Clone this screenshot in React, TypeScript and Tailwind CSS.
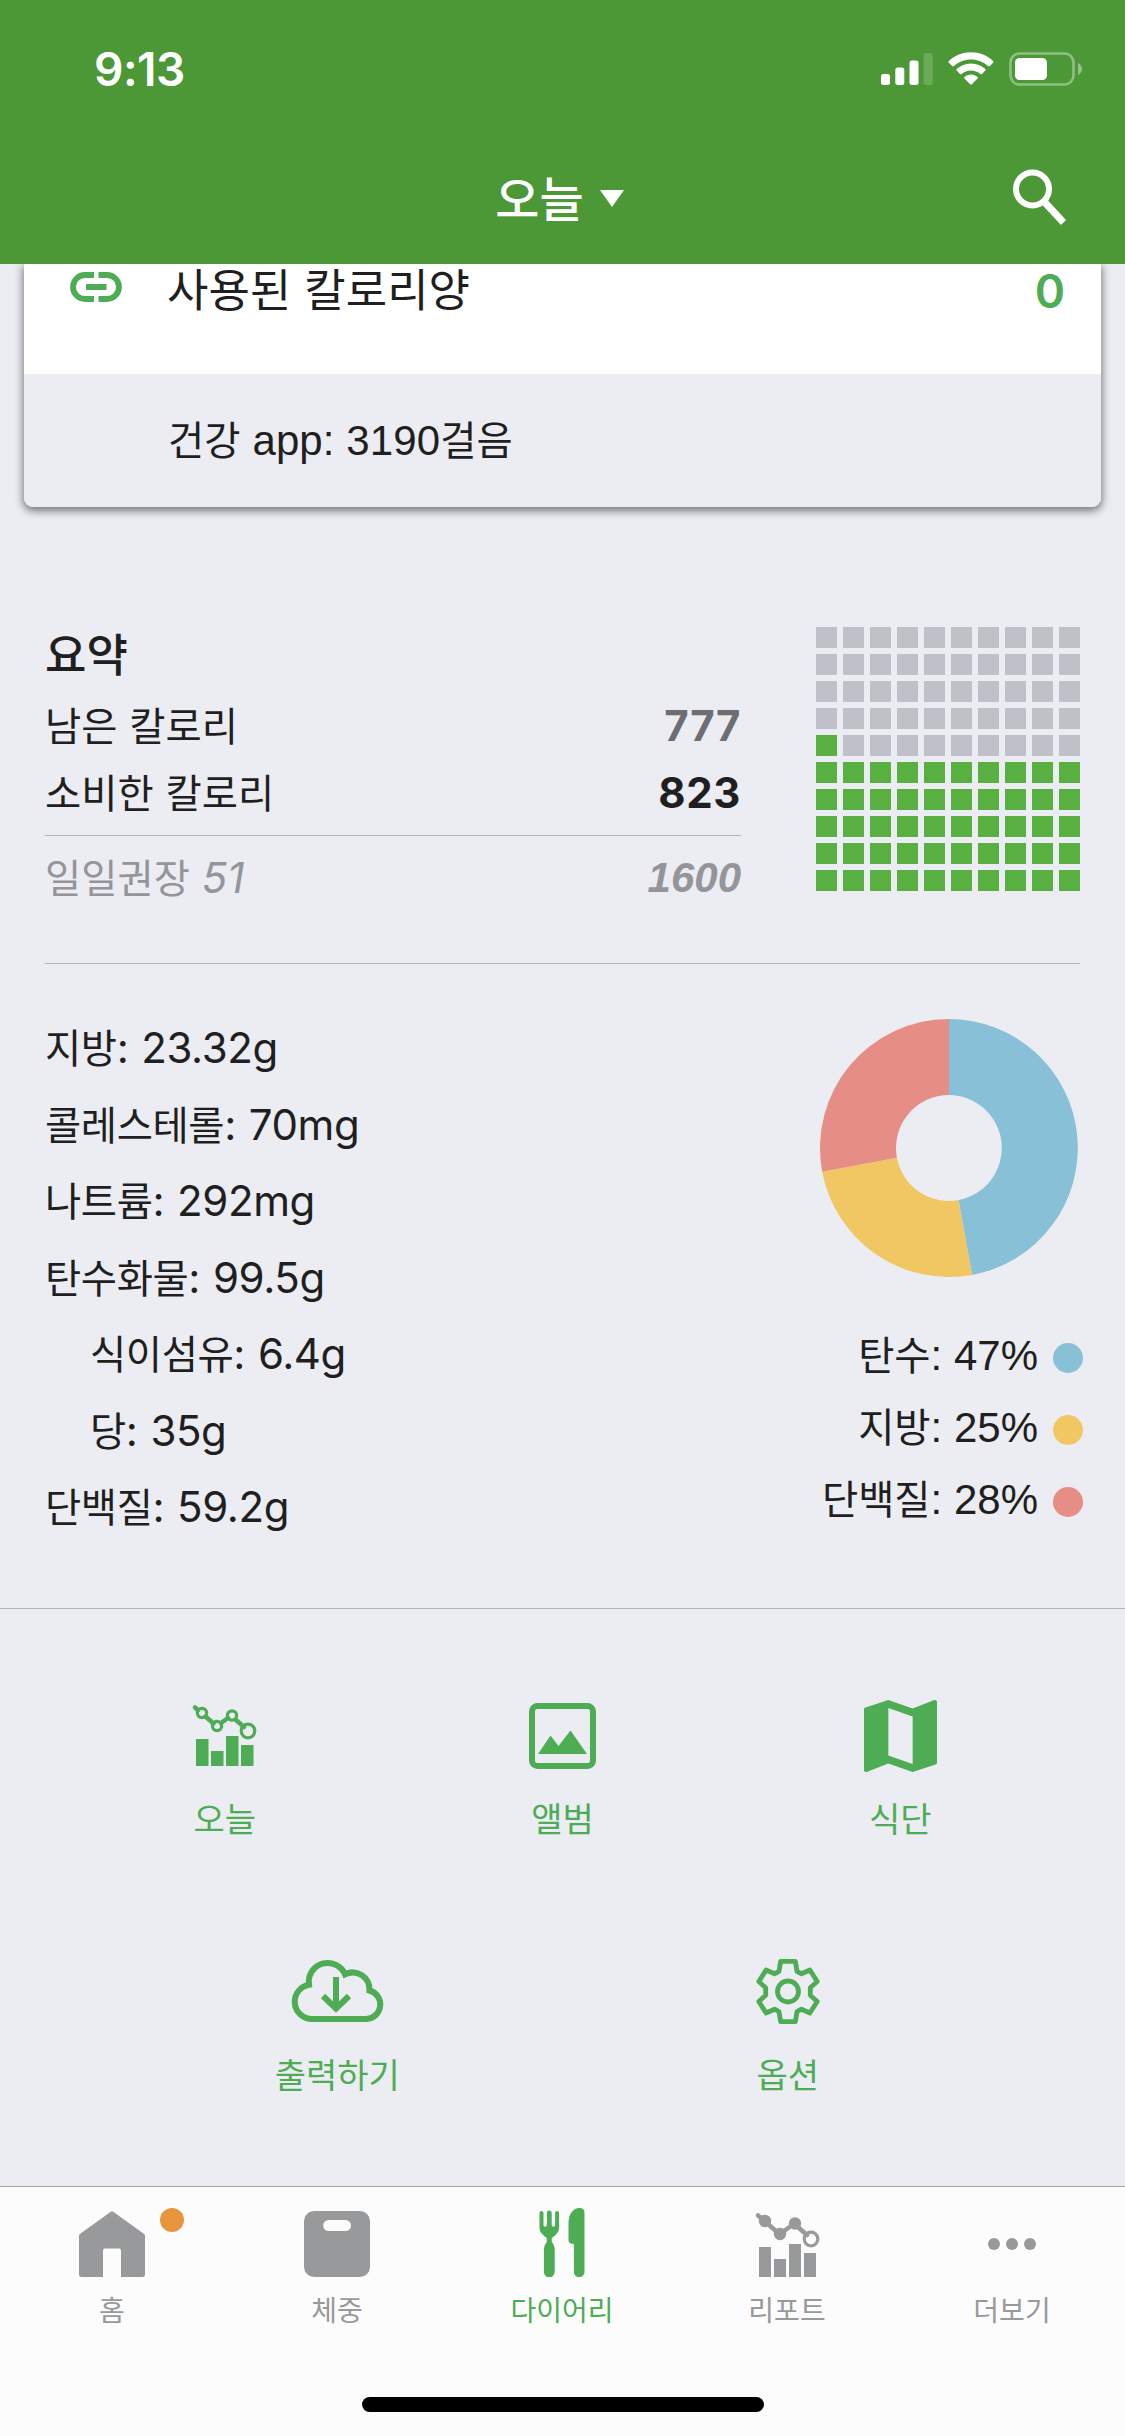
import type { ReactNode } from "react";

const HANGUL = /([\u3131-\uD79D]+(?: [\u3131-\uD79D]+)*)/;

/** Sets Hangul runs slightly smaller than the Latin text they sit beside. */
function Mixed({ children }: { children: string }) {
  return (
    <>
      {children.split(HANGUL).map((run, i) =>
        i % 2 ? (
          <span
            key={i}
            className="align-[0.5px] font-['Noto_Sans_CJK_KR',sans-serif] text-[0.938em] leading-none not-italic [word-spacing:3px]"
          >
            {run}
          </span>
        ) : (
          run
        ),
      )}
    </>
  );
}

function StatusBar() {
  return (
    <div className="flex h-[138px] items-center justify-between pl-[94px] pr-[43px]">
      <span className="text-[46px] font-semibold leading-none tracking-[-0.5px]">9:13</span>
      <div className="flex items-center">
        <svg className="mr-[15px] h-[34px] w-[52px]" viewBox="0 0 52 34" fill="currentColor">
          <rect x="0" y="22" width="9" height="11" rx="2.5" />
          <rect x="14.3" y="15.5" width="9" height="17.5" rx="2.5" />
          <rect x="28.5" y="8.5" width="9" height="24.5" rx="2.5" />
          <rect x="42.6" y="1" width="9" height="32" rx="2.5" opacity="0.18" />
        </svg>
        <svg className="mr-[15px] h-[34px] w-[46px]" viewBox="0 0 46 34" fill="currentColor">
          <path d="M23 0.3C31.6 0.3 39.3 3.6 45.1 9c.6.5.6 1.300 0 1.800l-3.300 3.300c-.5.5-1.200.5-1.700 0C35.600 10 29.600 7.500 23 7.500S10.400 10 5.900 14.100c-.5.5-1.200.5-1.700 0L.9 10.800C.3 10.300.3 9.500.9 9 6.700 3.600 14.400.3 23 .3z" />
          <path d="M23 11.400c5.500 0 10.500 2.100 14.300 5.500.5.5.5 1.200 0 1.700l-3.300 3.300c-.5.5-1.200.5-1.700 0-2.500-2.100-5.700-3.400-9.300-3.400s-6.800 1.300-9.300 3.400c-.5.5-1.200.5-1.700 0l-3.300-3.300c-.5-.5-.5-1.200 0-1.700 3.800-3.400 8.800-5.500 14.300-5.500z" />
          <path d="M23 22.500c2.500 0 4.800.9 6.500 2.400.5.5.5 1.200 0 1.700l-5.600 5.600c-.5.5-1.300.5-1.800 0l-5.600-5.600c-.5-.5-.5-1.200 0-1.700 1.700-1.500 4-2.400 6.500-2.400z" />
        </svg>
        <svg className="h-[34px] w-[73px]" viewBox="0 0 73 34" fill="currentColor">
          <rect x="1.500" y="1.500" width="63" height="31" rx="9" fill="none" stroke="currentColor" strokeWidth="2.600" opacity="0.38" />
          <rect x="6" y="6" width="32" height="22" rx="4.500" />
          <path d="M69 11v12c2.500-1 4-3.400 4-6s-1.500-5-4-6z" opacity="0.4" />
        </svg>
      </div>
    </div>
  );
}

function Header() {
  return (
    <header className="relative z-10 h-[264px] shrink-0 bg-[#4c9836] text-white">
      <StatusBar />
      <div className="grid h-[119px] grid-cols-[1fr_auto_1fr] items-center">
        <span />
        <button className="flex items-center pb-[2px] pr-[6px]">
          <span className="pb-[2px] font-['Noto_Sans_CJK_KR',sans-serif] text-[48px] font-medium leading-none">오늘</span>
          <svg className="ml-[16px] mt-[4px] h-[17px] w-[24px]" viewBox="0 0 24 17" fill="currentColor">
            <path d="M0 0H24L12 17z" />
          </svg>
        </button>
        <svg className="mr-[58px] h-[57px] w-[55px] justify-self-end" viewBox="0 0 55 57" fill="none" stroke="currentColor">
          <circle cx="20.500" cy="20" r="16.500" strokeWidth="6" />
          <path d="M32 32.500L51.500 53.500" strokeWidth="7" />
        </svg>
      </div>
    </header>
  );
}

function CalorieCard() {
  return (
    <section className="mx-6 shrink-0 rounded-b-[9px] shadow-[0_3px_9px_1px_rgba(0,0,0,0.5)]">
      <div className="flex h-[110px] items-start bg-white pl-[46px] pr-[36px]">
        <svg className="mt-[8px] h-[30px] w-[52px] text-[#4eac55]" viewBox="0 0 52 30" fill="none" stroke="currentColor">
          <path d="M24 3H15a12 12 0 0 0 0 24H24M28.500 3H37a12 12 0 0 1 0 24H28.500" strokeWidth="5.800" />
          <path d="M16 15H36.500" strokeWidth="6" />
        </svg>
        <span className="ml-[45px] mt-[-4px] text-[48px] leading-[60px]">
          <Mixed>사용된 칼로리양</Mixed>
        </span>
        <span className="ml-auto text-[46px] font-semibold leading-[54px] text-[#4eac55]">0</span>
      </div>
      <div className="flex h-[133px] items-center rounded-b-[9px] bg-[#ecedf2] pl-[144px] pt-px font-['Liberation_Sans',sans-serif] text-[42px] leading-[60px]">
        <span className="whitespace-pre tracking-[0.1px]">
          <Mixed>건강 app: 3190걸음</Mixed>
        </span>
      </div>
    </section>
  );
}

function BudgetGrid({ filled }: { filled: number }) {
  return (
    <div className="mt-1 grid h-[264px] grid-cols-[repeat(10,21px)] gap-[6px]">
      {Array.from({ length: 100 }, (_, i) => {
        const row = 9 - Math.floor(i / 10);
        const on = row * 10 + (i % 10) < filled;
        return <span key={i} className={`h-[21px] ${on ? "bg-[#58b041]" : "bg-[#c0c0c9]"}`} />;
      })}
    </div>
  );
}

function Summary() {
  return (
    <section className="mx-[45px] mt-[116px] flex h-[341px] shrink-0 justify-between border-b border-[#b3b5ba]">
      <div className="w-[696px] text-[42px]">
        <h2 className="h-[69px] text-[48px] font-medium leading-[64px]">
          <Mixed>요약</Mixed>
        </h2>
        <div className="flex justify-between leading-[67px]">
          <span><Mixed>남은 칼로리</Mixed></span>
          <span className="font-bold tracking-[0.6px] text-[#6d6e71]">777</span>
        </div>
        <div className="flex justify-between leading-[67px]">
          <span><Mixed>소비한 칼로리</Mixed></span>
          <span className="font-bold tracking-[0.6px]">823</span>
        </div>
        <div className="mt-[9px] flex justify-between border-t border-[#b3b5ba] pt-[12px] italic leading-[60px] text-[#949598]">
          <span><Mixed>일일권장 51</Mixed></span>
          <span className="font-['Liberation_Sans',sans-serif] font-bold">1600</span>
        </div>
      </div>
      <BudgetGrid filled={51} />
    </section>
  );
}

const NUTRIENTS = [
  { text: "지방: 23.32g" },
  { text: "콜레스테롤: 70mg" },
  { text: "나트륨: 292mg" },
  { text: "탄수화물: 99.5g" },
  { text: "식이섬유: 6.4g", sub: true },
  { text: "당: 35g", sub: true },
  { text: "단백질: 59.2g" },
];

const MACROS = [
  { text: "탄수: 47%", dot: "bg-[#88c0d7]" },
  { text: "지방: 25%", dot: "bg-[#f0c762]" },
  { text: "단백질: 28%", dot: "bg-[#e68d85]" },
];

function Donut() {
  return (
    <svg className="mr-[4.500px] h-[260px] w-[260px]" viewBox="-130 -130 260 260">
      <path d="M0 -129A129 129 0 0 1 23 126.900L9.500 52.100A53 53 0 0 0 0 -53z" fill="#88c0d7" />
      <path d="M23 126.900A129 129 0 0 1 -126.800 23.800L-52.100 9.800A53 53 0 0 0 9.500 52.100z" fill="#f0c762" />
      <path d="M-126.800 23.800A129 129 0 0 1 0 -129V-53A53 53 0 0 0 -52.100 9.800z" fill="#e68d85" />
    </svg>
  );
}

function Nutrition() {
  return (
    <section className="flex h-[645px] shrink-0 justify-between border-b border-[#b3b5ba] pl-[45px] pr-[42px]">
      <ul className="mt-[46px] text-[42px] leading-[76.5px]">
        {NUTRIENTS.map((n) => (
          <li key={n.text} className={n.sub ? "pl-[45px]" : ""}>
            <span className="tracking-[-0.4px] [word-spacing:1.5px]">
              <Mixed>{n.text}</Mixed>
            </span>
          </li>
        ))}
      </ul>
      <div className="mt-[53.5px] flex flex-col items-end">
        <Donut />
        <ul className="mt-[42.5px] font-['Liberation_Sans',sans-serif] text-[42px] leading-[72px]">
          {MACROS.map((m) => (
            <li key={m.text} className="flex items-center justify-end">
              <span><Mixed>{m.text}</Mixed></span>
              <span className={`ml-[15px] mt-[3px] size-[30px] rounded-full ${m.dot}`} />
            </li>
          ))}
        </ul>
      </div>
    </section>
  );
}

function TrendIcon({ solid = false }: { solid?: boolean }) {
  const node = solid ? "currentColor" : "none";
  return (
    <svg className="h-[66px] w-[66px]" viewBox="0 0 66 66" fill="none" stroke="currentColor" strokeWidth="3.2">
      {solid ? (
        <path d="M5 36h12v30H5zM20 48h12v18H20zM35 33h12v33H35zM50 42h12v24H50z" fill="currentColor" stroke="none" />
      ) : (
        <path d="M5 36h12.500v27H5zM20 48h12.500v15H20zM35 33h12.500v30H35zM50 42h12.500v21H50z" fill="currentColor" stroke="none" />
      )}
      <path d="M4 4.500L7 7M14.500 13.500L22.500 20.500M30 20L37 15M45 17L53 24" strokeWidth="4.500" strokeLinecap="round" />
      <circle cx="11" cy="10" r="4.600" fill={node} />
      <circle cx="26" cy="23" r="4.600" fill={node} />
      <circle cx="41" cy="12.500" r="4.600" fill={node} />
      <circle cx="57" cy="28" r="6.800" />
    </svg>
  );
}

function AlbumIcon() {
  return (
    <svg className="h-[66px] w-[67px]" viewBox="0 0 67 66" fill="currentColor">
      <rect x="3" y="3" width="61" height="60" rx="5.500" fill="none" stroke="currentColor" strokeWidth="6" />
      <path d="M9 51L21.500 32.500 29.500 43 41.500 27.500 58 51z" />
    </svg>
  );
}

function MapIcon() {
  return (
    <svg className="h-[72px] w-[73px]" viewBox="3 3 18 18" preserveAspectRatio="none" fill="currentColor">
      <path d="M20.500 3l-.16.03L15 5.100 9 3 3.360 4.900c-.21.07-.36.25-.36.48V20.500c0 .28.22.5.5.5l.16-.03L9 18.900l6 2.100 5.640-1.900c.21-.07.36-.25.36-.48V3.500c0-.28-.22-.5-.5-.5zM15 19l-6-2.110V5l6 2.110V19z" />
    </svg>
  );
}

function CloudIcon() {
  return (
    <svg className="mb-[3px] h-[63px] w-[93px] overflow-visible" viewBox="291 1959 93 63" fill="none" stroke="currentColor" strokeWidth="6">
      <path d="M311 2019H366.500A14.500 14.500 0 0 0 369.500 1990.500A17 17 0 0 0 345 1974.300A18.900 18.900 0 0 0 309 1984.700A17.300 17.300 0 0 0 311 2019z" />
      <path d="M336 1977V2009M323 1996L336 2008.500 349 1996" />
    </svg>
  );
}

function GearIcon() {
  return (
    <svg className="mb-[2px] h-[65px] w-[64px]" viewBox="0 0 64 65" fill="none" stroke="currentColor" strokeLinejoin="round">
      <path
        d="M24.600 2.400H39.400L41 12.300 45.500 14.800 53.900 11 61.200 22.500 54.300 28.700V36.300L61.200 42.500 53.900 54 45.500 50.200 41 52.700 39.400 62.600H24.600L23 52.700 18.500 50.200 10.100 54 2.800 42.500 9.700 36.300V28.700L2.800 22.500 10.100 11 18.500 14.800 23 12.300z"
        strokeWidth="4.800"
      />
      <circle cx="32" cy="32.500" r="10.500" strokeWidth="4.800" />
    </svg>
  );
}

function Action({ icon, label }: { icon: ReactNode; label: string }) {
  return (
    <button className="flex flex-col items-center text-[#4eac55]">
      <span className="flex h-[74px] items-center">{icon}</span>
      <span className="mt-[25px] pb-px font-['Noto_Sans_CJK_KR',sans-serif] text-[34px] leading-[40px]">{label}</span>
    </button>
  );
}

function Actions() {
  return (
    <section className="flex h-[577px] shrink-0 flex-col pt-[90px]">
      <div className="grid grid-cols-3 px-[56px]">
        <Action icon={<span className="mr-[2px]"><TrendIcon /></span>} label="오늘" />
        <Action icon={<AlbumIcon />} label="앨범" />
        <Action icon={<MapIcon />} label="식단" />
      </div>
      <div className="mt-[116px] grid grid-cols-2 px-[112px]">
        <Action icon={<CloudIcon />} label="출력하기" />
        <Action icon={<GearIcon />} label="옵션" />
      </div>
    </section>
  );
}

function HomeIcon() {
  return (
    <svg className="h-[66px] w-[66px]" viewBox="0 0 66 66" fill="currentColor">
      <path d="M31.500 1Q33 -.6 34.500 1L65.200 23Q66 23.700 66 25V63.500Q66 66 63.500 66H42V39.500Q42 37.500 40 37.500H26Q24 37.500 24 39.500V66H2.500Q0 66 0 63.500V25Q0 23.700 .8 23z" />
    </svg>
  );
}

function ScaleIcon() {
  return (
    <svg className="h-[66px] w-[66px]" viewBox="0 0 66 66" fill="currentColor">
      <path
        fillRule="evenodd"
        d="M10 0H56A10 10 0 0 1 66 10V56A10 10 0 0 1 56 66H10A10 10 0 0 1 0 56V10A10 10 0 0 1 10 0zM24.700 9A5.500 5.500 0 0 0 24.700 20H41.500A5.500 5.500 0 0 0 41.500 9z"
      />
    </svg>
  );
}

function CutleryIcon() {
  return (
    <svg className="-mt-[3px] h-[69px] w-[46px]" viewBox="539.500 2208 46 69" fill="currentColor">
      <path d="M540 2213a2 2 0 0 1 4 0V2225a1.700 1.700 0 0 0 3.400 0V2213a2.200 2.200 0 0 1 4.800 0V2225a1.700 1.700 0 0 0 3.400 0V2213a2 2 0 0 1 4 0V2228Q559.600 2233 552.300 2238V2242Q555.200 2245 555.200 2249V2272a5.400 5.400 0 0 1 -10.800 0V2249Q544.400 2245 547.300 2242V2238Q540 2233 540 2228z" />
      <path d="M585 2213V2272a5.300 5.300 0 0 1 -10.600 0V2244Q569 2244 569 2240V2224C569 2213 574 2208 580 2208Q585 2208 585 2213z" />
    </svg>
  );
}

function DotsIcon() {
  return (
    <svg className="h-[66px] w-[66px]" viewBox="0 0 66 66" fill="currentColor">
      <circle cx="15" cy="33" r="6" />
      <circle cx="33" cy="33" r="6" />
      <circle cx="51" cy="33" r="6" />
    </svg>
  );
}

const TABS = [
  { label: "홈", icon: <HomeIcon />, badge: true },
  { label: "체중", icon: <ScaleIcon /> },
  { label: "다이어리", icon: <CutleryIcon />, active: true },
  { label: "리포트", icon: <TrendIcon solid /> },
  { label: "더보기", icon: <DotsIcon /> },
];

function TabBar() {
  return (
    <nav className="flex h-[250px] shrink-0 flex-col border-t border-[#a2a4a8] bg-[#fcfcfd]">
      <div className="grid grid-cols-5 pt-[24px]">
        {TABS.map((t) => (
          <button
            key={t.label}
            className={`relative flex flex-col items-center ${t.active ? "text-[#4eac55]" : "text-[#98999b]"}`}
          >
            <span className="mr-px">{t.icon}</span>
            {t.badge && <span className="absolute left-[160px] top-[-3px] h-[24px] w-[24px] rounded-full bg-[#e8963e]" />}
            <span className="mr-px mt-[14px] font-['Noto_Sans_CJK_KR',sans-serif] text-[28px] leading-[36px]">{t.label}</span>
          </button>
        ))}
      </div>
      <div className="mx-auto mb-[24px] mt-auto h-[15px] w-[402px] rounded-full bg-black" />
    </nav>
  );
}

export default function App() {
  return (
    <div className="flex h-[2436px] w-[1125px] flex-col overflow-hidden bg-[#ecedf2] font-[Inter,sans-serif] text-[#1f1f1f]">
      <Header />
      <CalorieCard />
      <Summary />
      <Nutrition />
      <Actions />
      <TabBar />
    </div>
  );
}
